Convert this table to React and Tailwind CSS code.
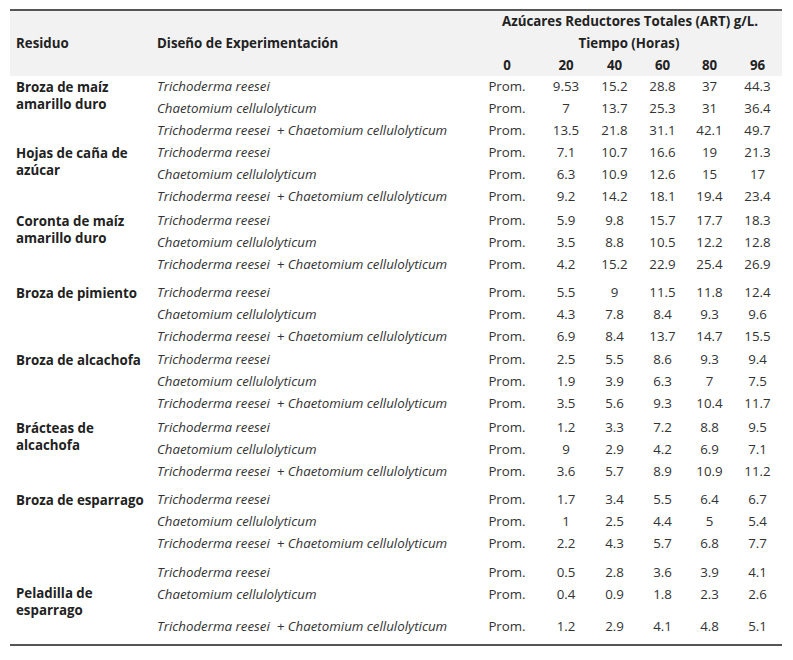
import React from "react";

// Azúcares reductores por residuo y diseño experimental
const groups = [
  { r: ["Broza de maíz", "amarillo duro"], gap: 0, rows: [
    ["9.53", "15.2", "28.8", "37", "44.3"],
    ["7", "13.7", "25.3", "31", "36.4"],
    ["13.5", "21.8", "31.1", "42.1", "49.7"],
  ] },
  { r: ["Hojas de caña de", "azúcar"], gap: 0, rows: [
    ["7.1", "10.7", "16.6", "19", "21.3"],
    ["6.3", "10.9", "12.6", "15", "17"],
    ["9.2", "14.2", "18.1", "19.4", "23.4"],
  ] },
  { r: ["Coronta de maíz", "amarillo duro"], gap: 2, rows: [
    ["5.9", "9.8", "15.7", "17.7", "18.3"],
    ["3.5", "8.8", "10.5", "12.2", "12.8"],
    ["4.2", "15.2", "22.9", "25.4", "26.9"],
  ] },
  { r: ["Broza de pimiento"], gap: 6, rows: [
    ["5.5", "9", "11.5", "11.8", "12.4"],
    ["4.3", "7.8", "8.4", "9.3", "9.6"],
    ["6.9", "8.4", "13.7", "14.7", "15.5"],
  ] },
  { r: ["Broza de alcachofa"], gap: 1, rows: [
    ["2.5", "5.5", "8.6", "9.3", "9.4"],
    ["1.9", "3.9", "6.3", "7", "7.5"],
    ["3.5", "5.6", "9.3", "10.4", "11.7"],
  ] },
  { r: ["Brácteas de", "alcachofa"], gap: 2, rows: [
    ["1.2", "3.3", "7.2", "8.8", "9.5"],
    ["9", "2.9", "4.2", "6.9", "7.1"],
    ["3.6", "5.7", "8.9", "10.9", "11.2"],
  ] },
  { r: ["Broza de esparrago"], gap: 6, rows: [
    ["1.7", "3.4", "5.5", "6.4", "6.7"],
    ["1", "2.5", "4.4", "5", "5.4"],
    ["2.2", "4.3", "5.7", "6.8", "7.7"],
  ] },
  { r: ["Peladilla de", "esparrago"], gap: 7, center: true, rows: [
    ["0.5", "2.8", "3.6", "3.9", "4.1"],
    ["0.4", "0.9", "1.8", "2.3", "2.6"],
    ["1.2", "2.9", "4.1", "4.8", "5.1"],
  ] },
];

const designs = [
  "Trichoderma reesei",
  "Chaetomium cellulolyticum",
  "Trichoderma reesei\u00a0 + Chaetomium cellulolyticum",
];

const valCols = ["w-[48px]", "w-[49px]", "w-[47px]", "w-[47px]", "w-[49px]"];

function DataRow({ design, vals, extraTop }) {
  return (
    <div className="flex h-[22px] items-center" style={extraTop ? { marginTop: extraTop } : undefined}>
      <div className="w-[321px] pl-[6px] italic">{design}</div>
      <div className="w-[70px] text-center">Prom.</div>
      {vals.map((v, i) => (
        <div key={i} className={`${valCols[i]} text-center`}>{v}</div>
      ))}
    </div>
  );
}

export default function App() {
  return (
    <div className="bg-white w-[793px] h-[660px] pt-[9px] pl-[10px] text-[13.3px] text-[#333] [font-family:'Open_Sans',sans-serif]">
      <div className="w-[772px] border-t-2 border-b-2 border-[#555] pb-[6px]">
        {/* header */}
        <div className="flex bg-[#f2f2f2] h-[65px] font-bold text-[#222]">
          <div className="w-[141px] pl-[6px] flex items-center">Residuo</div>
          <div className="w-[321px] pl-[6px] flex items-center">Diseño de Experimentación</div>
          <div className="w-[310px] flex flex-col">
            <div className="h-[22px] flex items-center justify-center pl-[6px]">Azúcares Reductores Totales (ART) g/L.</div>
            <div className="h-[22px] flex items-center justify-center pl-[4px]">Tiempo (Horas)</div>
            <div className="h-[21px] flex items-center">
              <div className="w-[70px] text-center">0</div>
              <div className="w-[48px] text-center">20</div>
              <div className="w-[49px] text-center">40</div>
              <div className="w-[47px] text-center">60</div>
              <div className="w-[47px] text-center">80</div>
              <div className="w-[49px] text-center">96</div>
            </div>
          </div>
        </div>
        {/* body */}
        <div>
          {groups.map((g, gi) => (
            <div key={gi} className="flex" style={g.gap ? { marginTop: g.gap } : undefined}>
              <div className={`w-[141px] pl-[6px] font-bold text-[#222] leading-[17px] ${g.center ? "self-center pt-[3px]" : "pt-[3px]"}`}>
                {g.r.map((l, li) => (
                  <div key={li}>{l}</div>
                ))}
              </div>
              <div className="flex flex-col">
                {g.rows.map((vals, ri) => (
                  <DataRow key={ri} design={designs[ri]} vals={vals} extraTop={g.center && ri === 2 ? 10 : 0} />
                ))}
              </div>
            </div>
          ))}
        </div>
      </div>
    </div>
  );
}
